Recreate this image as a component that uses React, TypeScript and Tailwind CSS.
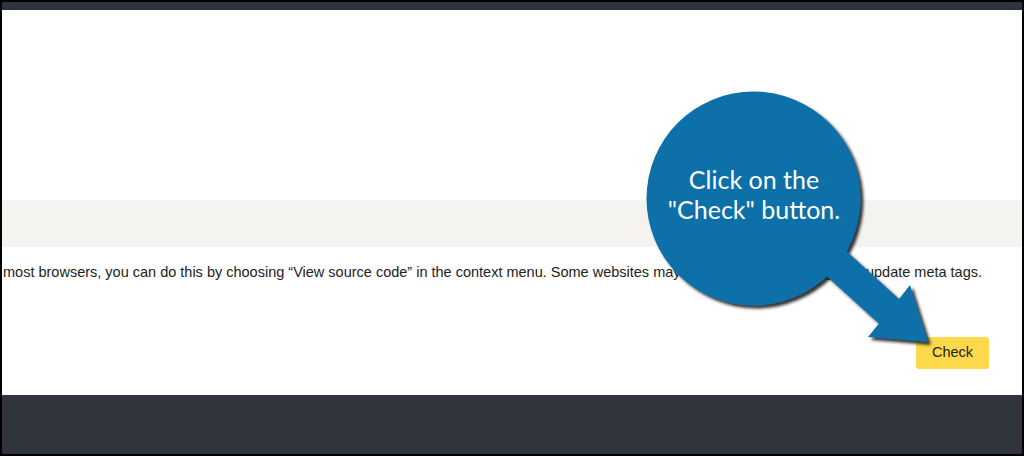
import React from "react";

// callout bubble + arrow drawn over the page
const Callout = () => (
    <div className="absolute inset-0 pointer-events-none">
        <svg width="1024" height="456" viewBox="0 0 1024 456" className="absolute left-0 top-0">
            <defs>
                <filter id="shade" x="-20%" y="-20%" width="140%" height="140%">
                    <feDropShadow dx="3" dy="3" stdDeviation="1.6" floodColor="#1e1e1e" floodOpacity="0.9" />
                </filter>
            </defs>
            <g filter="url(#shade)" fill="#086fa8">
                <polygon points="800,209 899,299 910,285 928,342 868,337 879,323.5 780,233.6" />
                <circle cx="753.5" cy="198.5" r="107" />
            </g>
        </svg>
        <div
            className="absolute left-[647px] top-[164px] w-[214px] text-center text-white text-[25px] leading-[30px]"
            style={{ fontFamily: "Lato, 'Open Sans', sans-serif" }}
        >
            <p>Click on the</p>
            <p>"Check" button.</p>
        </div>
    </div>
);

export default function App() {
    return (
        <div className="relative w-[1024px] h-[456px] bg-black p-[2px] overflow-hidden" style={{ fontFamily: "'Liberation Sans', Arial, sans-serif" }}>
            <div className="flex flex-col h-full">
                <div className="h-[8px] bg-[#2f333b]" />
                <div className="flex-1 flex flex-col bg-white">
                    <div className="h-[190px]" />
                    <div className="h-[47px] bg-[#f4f3f0]" />
                    <p className="mt-[15px] pl-[1px] whitespace-nowrap text-[14.5px] leading-[20px] text-[#222]">
                        most browsers, you can do this by choosing “View source code” in the context menu. Some websites may need quite a while longer to update meta tags.
                    </p>
                    <div className="flex justify-end mt-[55px] pr-[33px]">
                        <button className="w-[73px] h-[32px] rounded-[3px] bg-[#fdd94b] text-[14.5px] text-[#222]">
                            Check
                        </button>
                    </div>
                </div>
                <div className="h-[59px] bg-[#30343c]" />
            </div>
            <Callout />
        </div>
    );
}
